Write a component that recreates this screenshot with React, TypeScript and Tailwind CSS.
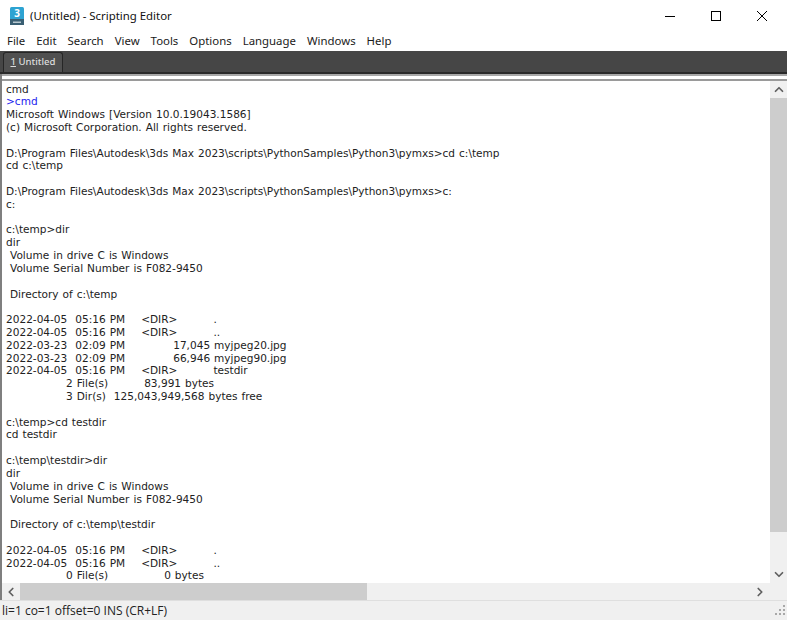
import { ChevronLeft, ChevronRight, ChevronUp, ChevronDown } from "lucide-react";

const MENU = ["File", "Edit", "Search", "View", "Tools", "Options", "Language", "Windows", "Help"];

const LINES = `Microsoft Windows [Version 10.0.19043.1586]
(c) Microsoft Corporation. All rights reserved.

D:\\Program Files\\Autodesk\\3ds Max 2023\\scripts\\PythonSamples\\Python3\\pymxs>cd c:\\temp
cd c:\\temp

D:\\Program Files\\Autodesk\\3ds Max 2023\\scripts\\PythonSamples\\Python3\\pymxs>c:
c:

c:\\temp>dir
dir
 Volume in drive C is Windows
 Volume Serial Number is F082-9450

 Directory of c:\\temp

2022-04-05  05:16 PM    <DIR>         .
2022-04-05  05:16 PM    <DIR>         ..
2022-03-23  02:09 PM            17,045 myjpeg20.jpg
2022-03-23  02:09 PM            66,946 myjpeg90.jpg
2022-04-05  05:16 PM    <DIR>         testdir
               2 File(s)         83,991 bytes
               3 Dir(s)  125,043,949,568 bytes free

c:\\temp>cd testdir
cd testdir

c:\\temp\\testdir>dir
dir
 Volume in drive C is Windows
 Volume Serial Number is F082-9450

 Directory of c:\\temp\\testdir

2022-04-05  05:16 PM    <DIR>         .
2022-04-05  05:16 PM    <DIR>         ..
               0 File(s)              0 bytes`;

function AppIcon() {
  return (
    <svg width="14" height="18" viewBox="0 0 14 18">
      <rect x="0" y="0" width="14" height="18" rx="1.5" fill="#2da3d2" />
      <rect x="0" y="12" width="14" height="6" fill="#3a5f73" />
      <text x="7" y="10" textAnchor="middle" fontSize="10" fontWeight="700" fill="#fff" fontFamily="'Open Sans', sans-serif">3</text>
      <rect x="3" y="14.5" width="8" height="1.5" fill="#b8c8d0" />
    </svg>
  );
}

export default function App() {
  return (
    <div className="flex h-[620px] w-[787px] flex-col overflow-hidden bg-white font-['Noto_Sans',sans-serif] text-black">
      <div className="flex h-[32px] shrink-0 items-center pl-[10px]">
        <AppIcon />
        <span className="ml-[6px] text-[11.4px] text-[#111]">(Untitled) - Scripting Editor</span>
        <div className="ml-auto flex items-center gap-[36px] pr-[20px]">
          <div className="h-px w-[10px] bg-black" />
          <div className="size-[10px] border border-black" />
          <svg width="10" height="10" viewBox="0 0 10 10" className="stroke-black">
            <path d="M0 0 L10 10 M10 0 L0 10" strokeWidth="1" />
          </svg>
        </div>
      </div>

      <div className="flex h-[19px] shrink-0 items-center gap-[11px] pb-[2px] pl-[7px] text-[11.4px] text-[#1a1a1a]">
        {MENU.map((m) => (
          <span key={m}>{m}</span>
        ))}
      </div>

      <div className="flex h-[23px] shrink-0 items-end border-b-2 border-[#2a2a2a] bg-[#464646] pl-[3px]">
        <div className="flex h-[20px] w-[60px] items-center justify-center rounded-t-[3px] border border-b-0 border-[#262626] bg-[#505050] text-[9.6px] font-medium text-[#dcdcdc]">
          <span><span className="underline">1</span> Untitled</span>
        </div>
      </div>

      <div className="flex min-h-0 flex-1 flex-col border-l-2 border-[#7f7f7f]">
        <div className="h-[2px] shrink-0 bg-[#a8a8a8]" />
        <div className="h-[5px] shrink-0 border-b-2 border-[#9a9a9a] bg-white" />
        <div className="flex min-h-0 flex-1">
          <div className="min-w-0 flex-1 overflow-hidden whitespace-pre pl-1 pt-[1.5px] font-['DejaVu_Sans',sans-serif] text-[10.55px] leading-[12.82px] text-[#222] [word-spacing:0.65px]">
            <div>cmd</div>
            <div className="text-[#2222ee]">&gt;cmd</div>
            <div>{LINES}</div>
          </div>
          <div className="flex w-[17px] shrink-0 flex-col items-center bg-[#f0f0f0]">
            <ChevronUp size={14} strokeWidth={3} className="my-[1px] h-[15px] text-[#606060]" />
            <div className="w-full flex-1 bg-[#cdcdcd]" />
            <div className="h-[34px]" />
            <ChevronDown size={14} strokeWidth={3} className="my-[1px] h-[15px] text-[#606060]" />
          </div>
        </div>
        <div className="flex h-[17px] shrink-0 items-center bg-[#f0f0f0]">
          <ChevronLeft size={14} strokeWidth={3} className="ml-[2px] w-[14px] text-[#606060]" />
          <div className="ml-[2px] h-full w-[347px] bg-[#cdcdcd]" />
          <div className="flex-1" />
          <ChevronRight size={14} strokeWidth={3} className="mr-[20px] text-[#606060]" />
        </div>
      </div>

      <div className="flex h-[20px] shrink-0 items-center justify-between border-t border-[#dfdfdf] bg-[#f0f0f0] pl-[2px] pr-[1px] font-['Open_Sans',sans-serif] text-[12px] text-[#222]">
        <span>li=1 co=1 offset=0 INS (CR+LF)</span>
        <svg width="11" height="11" viewBox="0 0 11 11" className="fill-[#a8a8a8]">
          <rect x="8" y="0" width="2" height="2" />
          <rect x="8" y="4" width="2" height="2" />
          <rect x="4" y="4" width="2" height="2" />
          <rect x="8" y="8" width="2" height="2" />
          <rect x="4" y="8" width="2" height="2" />
          <rect x="0" y="8" width="2" height="2" />
        </svg>
      </div>
    </div>
  );
}
